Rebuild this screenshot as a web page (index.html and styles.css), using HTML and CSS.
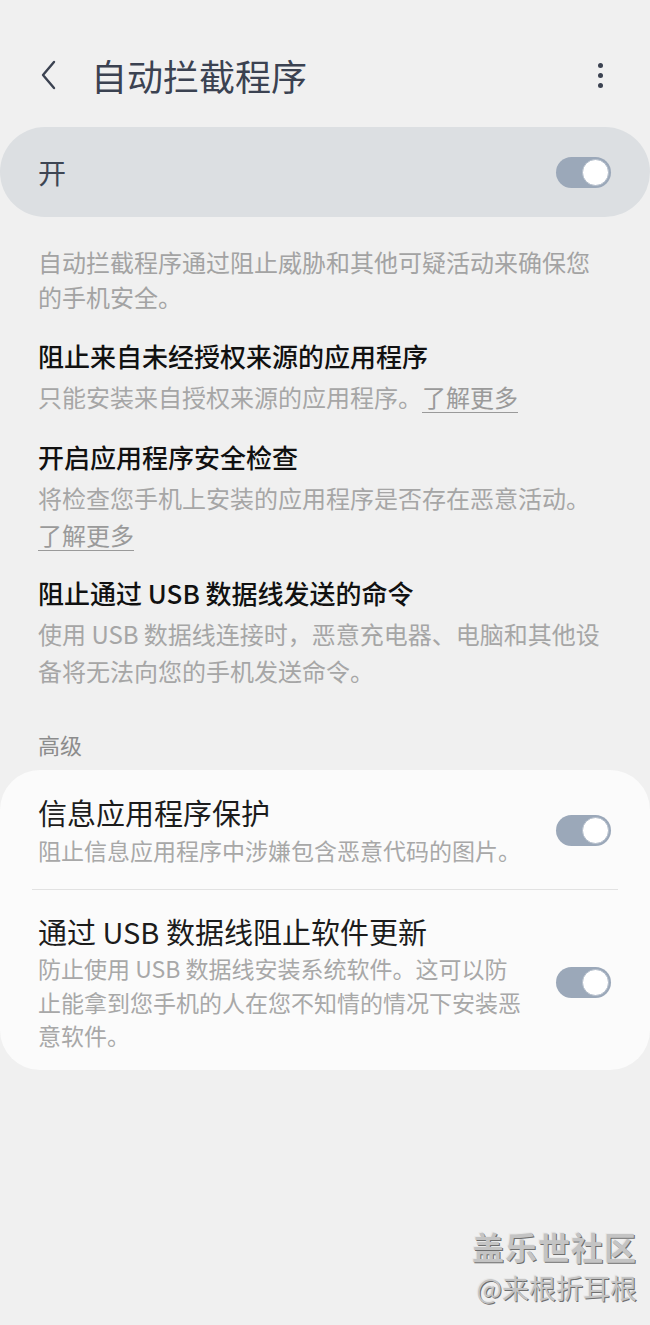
FILE: index.html
```html
<!DOCTYPE html>
<html lang="zh-CN">
<head>
<meta charset="utf-8">
<title>自动拦截程序</title>
<link rel="stylesheet" href="styles.css">
</head>
<body>
<div class="page">
  <header class="appbar">
    <div class="back">
      <svg width="22" height="32" viewBox="0 0 22 32"><path d="M16 3 L5 16 L16 29" fill="none" stroke="#3b4251" stroke-width="2.4" stroke-linecap="round" stroke-linejoin="round"/></svg>
    </div>
    <h1 class="title">自动拦截程序</h1>
    <div class="kebab"><span></span><span></span><span></span></div>
  </header>

  <div class="master">
    <span class="master-label">开</span>
    <span class="toggle"><span class="knob"></span></span>
  </div>

  <p class="desc">自动拦截程序通过阻止威胁和其他可疑活动来确保您的手机安全。</p>

  <div class="item">
    <div class="item-title">阻止来自未经授权来源的应用程序</div>
    <div class="item-sub">只能安装来自授权来源的应用程序。<a class="more">了解更多</a></div>
  </div>
  <div class="item">
    <div class="item-title">开启应用程序安全检查</div>
    <div class="item-sub">将检查您手机上安装的应用程序是否存在恶意活动。<a class="more">了解更多</a></div>
  </div>
  <div class="item item-last">
    <div class="item-title">阻止通过 USB 数据线发送的命令</div>
    <div class="item-sub">使用 USB 数据线连接时，恶意充电器、电脑和其他设备将无法向您的手机发送命令。</div>
  </div>

  <div class="section-label">高级</div>

  <div class="card">
    <div class="row row-first">
      <div class="row-text">
        <div class="row-title">信息应用程序保护</div>
        <div class="row-sub">阻止信息应用程序中涉嫌包含恶意代码的图片。</div>
      </div>
      <span class="toggle"><span class="knob"></span></span>
    </div>
    <div class="divider"></div>
    <div class="row row-second">
      <div class="row-text">
        <div class="row-title">通过 USB 数据线阻止软件更新</div>
        <div class="row-sub">防止使用 USB 数据线安装系统软件。这可以防止能拿到您手机的人在您不知情的情况下安装恶意软件。</div>
      </div>
      <span class="toggle"><span class="knob"></span></span>
    </div>
  </div>

  <div class="watermark">
    <div class="wm-1">盖乐世社区</div>
    <div class="wm-2">@来根折耳根</div>
  </div>
</div>
</body>
</html>
```

FILE: styles.css
```css
* { box-sizing: border-box; }
html, body {
  margin: 0;
  padding: 0;
  background: #f0f0f0;
}
body {
  font-family: "Noto Sans CJK SC", "Noto Sans", sans-serif;
  width: 650px;
  height: 1325px;
  overflow: hidden;
}
.page {
  position: relative;
  display: flow-root;
  height: 1325px;
}

/* App bar */
.appbar {
  display: flex;
  align-items: center;
  height: 52px;
  margin-top: 49px;
  padding: 0 40px 0 38px;
}
.back {
  width: 53px;
  display: flex;
  align-items: center;
}
.title {
  flex: 1;
  margin: 0;
  font-size: 36px;
  font-weight: 400;
  color: #3b4251;
  line-height: 52px;
}
.kebab {
  display: flex;
  flex-direction: column;
  gap: 5px;
  align-items: center;
  width: 24px;
  margin-right: -2px;
}
.kebab span {
  width: 5px;
  height: 5px;
  border-radius: 50%;
  background: #3b4251;
}

/* Master switch */
.master {
  margin-top: 26px;
  height: 90px;
  border-radius: 45px;
  background: #dcdfe2;
  display: flex;
  align-items: center;
  justify-content: space-between;
  padding: 0 39px 0 38px;
}
.master-label {
  font-size: 28px;
  color: #3d4553;
  line-height: 1;
}

.toggle {
  position: relative;
  display: inline-block;
  width: 55px;
  height: 31px;
  border-radius: 16px;
  background: #9ba8b9;
  flex: none;
}
.knob {
  position: absolute;
  right: 2px;
  top: 2px;
  width: 27px;
  height: 27px;
  border-radius: 50%;
  background: #ffffff;
  border: 1px solid #b3bdca;
}

/* Description + items */
.desc {
  margin: 27px 0 0;
  padding: 0 38px;
  font-size: 24px;
  line-height: 35px;
  color: #a3a3a3;
}
.item {
  padding: 0 38px;
  margin-top: 22px;
}
.item-last {
  margin-top: 20px;
}
.item-title {
  font-size: 26px;
  line-height: 40px;
  font-weight: 500;
  color: #111111;
}
.item-sub {
  margin-top: 2px;
  font-size: 24px;
  line-height: 37px;
  color: #a6a6a6;
}
.more {
  white-space: nowrap;
  text-decoration: underline;
  text-underline-offset: 5px;
  text-decoration-thickness: 1px;
  color: #9a9a9a;
}

.section-label {
  margin-top: 40px;
  padding: 0 38px;
  font-size: 22px;
  line-height: 30px;
  color: #8c8c8c;
}

/* Advanced card */
.card {
  margin-top: 11px;
  background: #fbfbfb;
  border-radius: 40px;
  padding-bottom: 17px;
}
.row {
  display: flex;
  align-items: center;
  padding: 0 39px 0 38px;
  gap: 24px;
}
.row-first {
  padding-top: 23px;
  padding-bottom: 22px;
}
.row-second {
  padding-top: 22px;
}
.row-text {
  flex: 1;
  min-width: 0;
}
.row-title {
  font-size: 29px;
  line-height: 38px;
  color: #1c1c1c;
}
.row-sub {
  margin-top: 2px;
  font-size: 23px;
  line-height: 33.5px;
  color: #a8a8a8;
  max-width: 486px;
}
.row-first .row-sub { line-height: 34px; }
.divider {
  height: 1px;
  background: #e2e2e2;
  margin: 0 32px;
}

/* Watermark */
.watermark {
  position: absolute;
  right: 13px;
  top: 1226px;
  text-align: right;
  color: #c4c4c4;
}
.wm-1 {
  font-size: 32px;
  line-height: 40px;
  font-weight: 700;
  letter-spacing: 1px;
  text-shadow: 1px 1px 0 #6e6e6e, -1px -1px 0 #e8e8e8;
}
.wm-2 {
  font-size: 27px;
  line-height: 44px;
  text-shadow: 1px 1px 0 #6e6e6e, -1px -1px 0 #e8e8e8;
}
```
